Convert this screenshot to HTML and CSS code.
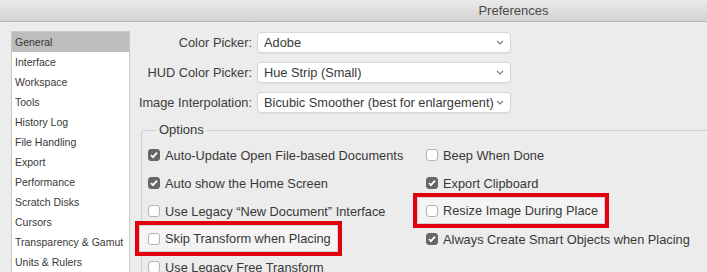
FILE: index.html
```html
<!DOCTYPE html>
<html lang="en">
<head>
  <meta charset="UTF-8" />
  <title>Preferences</title>
  <link rel="stylesheet" href="styles.css">
</head>
<body>
  <div class="titlebar">Preferences</div>

  <div class="main">
    <ul class="sidebar">
      <li class="active">General</li>
      <li>Interface</li>
      <li>Workspace</li>
      <li>Tools</li>
      <li>History Log</li>
      <li>File Handling</li>
      <li>Export</li>
      <li>Performance</li>
      <li>Scratch Disks</li>
      <li>Cursors</li>
      <li>Transparency &amp; Gamut</li>
      <li>Units &amp; Rulers</li>
    </ul>

    <div class="content">
      <div class="pickers">
        <label>Color Picker:</label>
        <div class="select"><span>Adobe</span><svg viewBox="0 0 8 5"><path d="M1 1l3 3 3-3" /></svg></div>

        <label>HUD Color Picker:</label>
        <div class="select"><span>Hue Strip (Small)</span><svg viewBox="0 0 8 5"><path d="M1 1l3 3 3-3" /></svg></div>

        <label>Image Interpolation:</label>
        <div class="select"><span>Bicubic Smoother (best for enlargement)</span><svg viewBox="0 0 8 5"><path d="M1 1l3 3 3-3" /></svg></div>
      </div>

      <fieldset class="options">
        <legend>Options</legend>
        <div class="checks">
          <div class="check"><span class="box on"></span>Auto-Update Open File-based Documents</div>
          <div class="check"><span class="box"></span>Beep When Done</div>

          <div class="check"><span class="box on"></span>Auto show the Home Screen</div>
          <div class="check"><span class="box on"></span>Export Clipboard</div>

          <div class="check"><span class="box"></span>Use Legacy “New Document” Interface</div>
          <div class="check marked"><div class="mark-inner"><span class="box"></span>Resize Image During Place</div></div>

          <div class="check marked"><div class="mark-inner"><span class="box"></span>Skip Transform when Placing</div></div>
          <div class="check"><span class="box on"></span>Always Create Smart Objects when Placing</div>

          <div class="check"><span class="box"></span>Use Legacy Free Transform</div>
        </div>
      </fieldset>
    </div>
  </div>
</body>
</html>
```

FILE: styles.css
```css
:root {
  --bg: #ececec;
  --text: #383838;
  --line: #cfcfcf;
  --mark: #e3000f;
  --font: "Liberation Sans", Arial, sans-serif;
}

html, body {
  margin: 0;
  height: 100%;
  overflow: hidden;
}

body {
  font-family: var(--font);
  background-color: var(--bg);
  color: var(--text);
  font-size: 12.8px;
}

.titlebar {
  height: 21px;
  border-bottom: 1px solid #b4b4b4;
  background: linear-gradient(#e9e9e9, #d3d3d3);
  padding-left: 320px;
  text-align: center;
  line-height: 22px;
  font-size: 13px;
  color: #4a4a4a;
}

.main {
  display: flex;
  padding: 9px 0 0 11px;
}

.sidebar {
  list-style: none;
  margin: 0;
  padding: 0;
  width: 117px;
  height: 260px;
  border: 1px solid #c9c9c9;
  background-color: #fff;
  font-size: 10.5px;
  flex-shrink: 0;
}

.sidebar li {
  height: 20px;
  line-height: 20px;
  padding-left: 3px;
  white-space: nowrap;
}

.sidebar li.active {
  background-color: #bdbdbd;
}

.content {
  flex: 1;
  padding-top: 1px;
}

.pickers {
  display: grid;
  grid-template-columns: 122px 254px;
  column-gap: 5px;
  row-gap: 9px;
  align-items: center;
}

.pickers label {
  text-align: right;
  white-space: nowrap;
  color: #3d3d3d;
}

.select {
  height: 21px;
  box-sizing: border-box;
  border: 1px solid #d8d8d8;
  border-radius: 4px;
  background-color: #fff;
  box-shadow: 0 1px 1px rgba(0, 0, 0, 0.05);
  display: flex;
  align-items: center;
  justify-content: space-between;
  padding: 0 6px 0 6px;
  white-space: nowrap;
}

.select svg {
  width: 8px;
  height: 5px;
  fill: none;
  stroke: #7a7a7a;
  stroke-width: 1.1;
}

.options {
  margin: 9px 0 0 11px;
  width: 700px;
  padding: 3px 0 20px 6px;
  border: 1px solid var(--line);
  border-radius: 4px;
}

.options legend {
  margin-left: 8px;
  padding: 0 3px;
  line-height: 16px;
  font-size: 13px;
}

.checks {
  display: grid;
  grid-template-columns: 278px auto;
  grid-auto-rows: 28px;
}

.check {
  display: flex;
  align-items: center;
  white-space: nowrap;
  justify-self: start;
}

.box {
  width: 12px;
  height: 12px;
  box-sizing: border-box;
  border: 1px solid #b3b3b3;
  border-radius: 3px;
  background-color: #fff;
  margin-right: 5px;
  flex-shrink: 0;
}

.box.on {
  border-color: #666;
  background: #666 url("data:image/svg+xml,%3Csvg xmlns='http://www.w3.org/2000/svg' viewBox='0 0 12 12'%3E%3Cpath d='M3 6.2l2 2 4-4.5' fill='none' stroke='white' stroke-width='1.8'/%3E%3C/svg%3E") center / 12px 12px no-repeat;
}

.check.marked {
  margin: -4px 0 -3px -13px;
  border: 4px solid var(--mark);
}

.mark-inner {
  display: flex;
  align-items: center;
  height: 100%;
  box-sizing: border-box;
  border: 1px solid #d3d3d3;
  background-color: #f4f4f4;
  padding: 0 6px 0 8px;
}
```
